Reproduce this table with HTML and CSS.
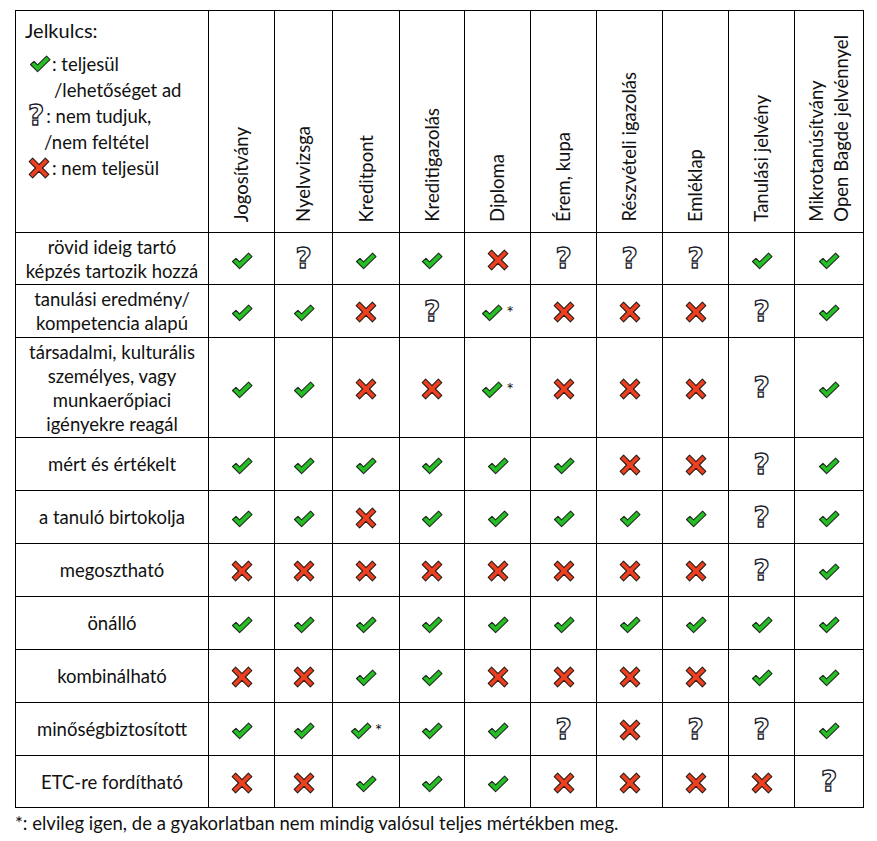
FILE: index.html
```html
<!DOCTYPE html>
<html lang="hu">
<head>
<meta charset="utf-8">
<title>Jelkulcs táblázat</title>
<link rel="stylesheet" href="styles.css">
</head>
<body>
<svg class="defs" width="0" height="0" aria-hidden="true">
  <defs>
    <symbol id="ok" viewBox="0 0 22 18">
      <polygon points="1.5,9.5 5,6.3 8.6,9.9 17.6,1.2 21,4.6 8.6,16.6" fill="#25bf25" stroke="#1e2a1e" stroke-width="1.1" stroke-linejoin="round"/>
    </symbol>
    <symbol id="no" viewBox="0 0 22 22">
      <polygon points="1.2,4.6 4.6,1.2 11,7.6 17.4,1.2 20.8,4.6 14.4,11 20.8,17.4 17.4,20.8 11,14.4 4.6,20.8 1.2,17.4 7.6,11" fill="#ee4020" stroke="#2a1a14" stroke-width="1.1" stroke-linejoin="round"/>
    </symbol>
  </defs>
</svg>
<div class="page">
<table class="grid">
  <colgroup>
    <col class="c-label">
    <col class="c66"><col class="c58"><col class="c67"><col class="c65"><col class="c66">
    <col class="c66"><col class="c66"><col class="c66"><col class="c66"><col class="c69">
  </colgroup>
  <thead>
    <tr class="head">
      <th class="key">
        <div class="key-title">Jelkulcs:</div>
        <div class="key-line"><svg class="ico ok"><use href="#ok"/></svg><span>: teljesül</span></div>
        <div class="key-line ind1">/lehetőséget ad</div>
        <div class="key-line"><span class="q">?</span><span>: nem tudjuk,</span></div>
        <div class="key-line ind2">/nem feltétel</div>
        <div class="key-line"><svg class="ico no"><use href="#no"/></svg><span>: nem teljesül</span></div>
      </th>
      <th><div class="hd"><span class="vt">Jogosítvány</span></div></th>
      <th><div class="hd"><span class="vt">Nyelvvizsga</span></div></th>
      <th><div class="hd"><span class="vt">Kreditpont</span></div></th>
      <th><div class="hd"><span class="vt">Kreditigazolás</span></div></th>
      <th><div class="hd"><span class="vt">Diploma</span></div></th>
      <th><div class="hd"><span class="vt">Érem, kupa</span></div></th>
      <th><div class="hd"><span class="vt">Részvételi igazolás</span></div></th>
      <th><div class="hd"><span class="vt">Emléklap</span></div></th>
      <th><div class="hd"><span class="vt">Tanulási jelvény</span></div></th>
      <th><div class="hd"><span class="vt">Mikrotanúsítvány<br>Open Bagde jelvénnyel</span></div></th>
    </tr>
  </thead>
  <tbody id="rows"></tbody>
</table>
<p class="note">*: elvileg igen, de a gyakorlatban nem mindig valósul teljes mértékben meg.</p>
</div>
<script src="app.js"></script>
</body>
</html>
```

FILE: app.js
```js
var data = [
  ["rövid ideig tartó<br>képzés tartozik hozzá", "Y ? Y Y X ? ? ? Y Y", "r1"],
  ["tanulási eredmény/<br>kompetencia alapú", "Y Y X ? Y* X X X ? Y", "r2"],
  ["társadalmi, kulturális<br>személyes, vagy<br>munkaerőpiaci<br>igényekre reagál", "Y Y X X Y* X X X ? Y", "r3"],
  ["mért és értékelt", "Y Y Y Y Y Y X X ? Y", "r4"],
  ["a tanuló birtokolja", "Y Y X Y Y Y Y Y ? Y", "r4"],
  ["megosztható", "X X X X X X X X ? Y", "r4"],
  ["önálló", "Y Y Y Y Y Y Y Y Y Y", "r4"],
  ["kombinálható", "X X Y Y X X X X Y Y", "r4"],
  ["minőségbiztosított", "Y Y Y* Y Y ? X ? ? Y", "r4"],
  ["ETC-re fordítható", "X X Y Y Y X X X X ?", "r1"]
];
function icon(v) {
  var star = v.indexOf("*") >= 0 ? '<span class="star">*</span>' : '';
  if (v[0] === "Y") return '<span class="mark"><svg class="ico ok"><use href="#ok"/></svg>' + star + '</span>';
  if (v[0] === "X") return '<span class="mark"><svg class="ico no"><use href="#no"/></svg>' + star + '</span>';
  return '<span class="mark"><span class="q">?</span>' + star + '</span>';
}
var html = "";
data.forEach(function (r) {
  html += '<tr class="' + r[2] + '"><td class="label">' + r[0] + '</td>';
  r[1].split(" ").forEach(function (v) { html += '<td class="cell">' + icon(v) + '</td>'; });
  html += '</tr>';
});
document.getElementById("rows").innerHTML = html;
```

FILE: styles.css
```css
html, body {
  margin: 0;
  padding: 0;
  background: #fff;
}
body {
  font-family: Lato, "Open Sans", sans-serif;
  color: #111;
  font-size: 18.5px;
}
.defs {
  position: absolute;
  width: 0;
  height: 0;
}
.page {
  padding: 10px 0 0 15px;
}
.grid {
  border-collapse: collapse;
  table-layout: fixed;
  width: 849px;
}
.grid th, .grid td {
  border: 1px solid #000;
  padding: 0;
}
.c-label { width: 193px; }
.c66 { width: 66px; }
.c58 { width: 58px; }
.c67 { width: 67px; }
.c65 { width: 65px; }
.c69 { width: 69px; }

.head { height: 222px; }
.head th {
  font-weight: normal;
  vertical-align: bottom;
}
.hd {
  height: 221px;
  display: flex;
  justify-content: center;
  align-items: flex-end;
  padding-bottom: 10px;
  box-sizing: border-box;
}
.vt {
  writing-mode: vertical-rl;
  transform: rotate(180deg);
  text-align: left;
  line-height: 25px;
  white-space: nowrap;
}

.key {
  vertical-align: top !important;
  text-align: left;
  padding: 6px 0 0 9px !important;
}
.key-title {
  font-size: 20px;
  line-height: 26px;
  margin-bottom: 8px;
}
.key-line {
  display: flex;
  align-items: center;
  height: 26px;
  line-height: 26px;
  white-space: nowrap;
}
.key-line .ico.ok { margin-left: 4px; margin-right: 1px; }
.key-line .ico.no { margin-left: 3px; margin-right: 2px; }
.key-line .q { margin-left: 3px; margin-right: 2px; }
.ind1 { padding-left: 29px; }
.ind2 { padding-left: 19px; }

.r1 { height: 52px; }
.r2 { height: 53px; }
.r3 { height: 100px; }
.r4 { height: 53px; }

.label {
  text-align: center;
  vertical-align: middle;
  line-height: 24px;
}
.cell {
  text-align: center;
  vertical-align: middle;
}
.mark {
  display: inline-flex;
  align-items: flex-start;
  vertical-align: middle;
}
.ico {
  display: block;
}
.ico.ok { width: 22px; height: 18px; }
.ico.no { width: 22px; height: 22px; }
.q {
  display: inline-block;
  font-family: "DejaVu Sans", sans-serif;
  font-weight: bold;
  font-size: 28px;
  line-height: 24px;
  height: 24px;
  color: #fff;
  -webkit-text-stroke: 1.3px #1b1b2a;
}
.star {
  font-size: 18px;
  line-height: 16px;
  margin-left: 3px;
  margin-top: 0;
}
.note {
  margin: 4px 0 0 0;
  line-height: 22px;
}
```
